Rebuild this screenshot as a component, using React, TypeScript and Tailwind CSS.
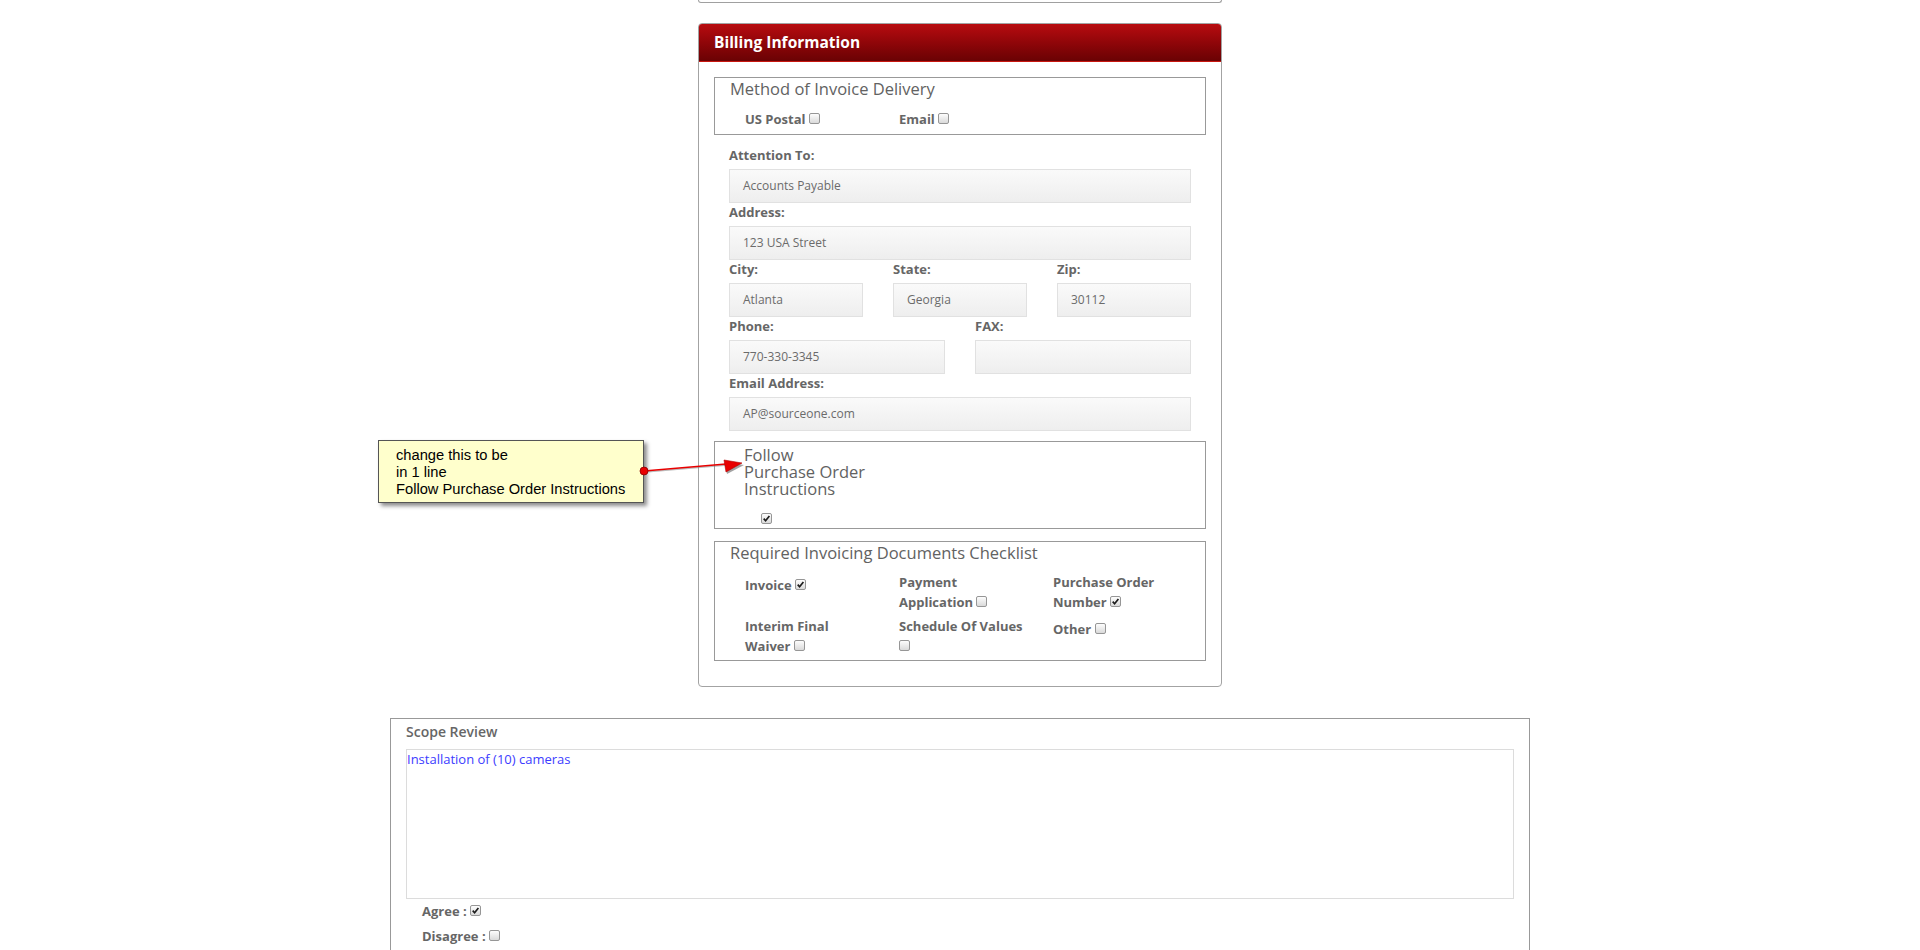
import React from "react";

const font = { fontFamily: '"Open Sans", "Liberation Sans", sans-serif' };

function Check({ checked = false, className = "" }: { checked?: boolean; className?: string }) {
  return (
    <span
      className={`inline-block w-[11px] h-[11px] rounded-[2px] border border-[#969696] bg-gradient-to-b from-[#fdfdfd] to-[#dadada] align-baseline ${className}`}
    >
      {checked && (
        <svg viewBox="0 0 9 9" className="block w-full h-full">
          <path d="M1.7 4.6 3.6 6.7 7.4 2" fill="none" stroke="#1c1c1c" strokeWidth="1.7" />
        </svg>
      )}
    </span>
  );
}

function Field({ label, value = "", className = "" }: { label: string; value?: string; className?: string }) {
  return (
    <div className={className}>
      <div className="mb-[5px] text-[13px] font-bold leading-[18px] text-[#666]">{label}</div>
      <div className="flex h-[34px] items-center border border-[#e1e1e1] bg-gradient-to-b from-[#fafafa] to-[#eeeeee] pl-[13px] text-[12px] text-[#6b6b6b]">
        {value}
      </div>
    </div>
  );
}

const item = "text-[13px] font-bold leading-[20px] text-[#666]";

export default function App() {
  return (
    <div className="relative h-[950px] w-[1920px] overflow-hidden bg-white" style={font}>
      {/* end of the panel above */}
      <div className="mx-auto h-[3px] w-[524px] rounded-b-[3px] border-x border-b border-[#a0a0a0]" />

      {/* Billing Information */}
      <div className="mx-auto mt-[20px] w-[524px] overflow-hidden rounded-[4px] border border-[#a3a3a3]">
        <div className="flex h-[38px] items-center border-b border-[#c8160f] bg-gradient-to-b from-[#b80c10] to-[#6a0204] pl-[15px] text-[15.5px] font-bold text-white">
          Billing Information
        </div>
        <div className="px-[15px] pb-[25px] pt-[15px]">
          <div className="border border-[#999] pb-[5px] pt-[2px]">
            <div className="pl-[15px] text-[16.5px] leading-[17px] text-[#626262]">Method of Invoice Delivery</div>
            <div className="mt-[12px] grid grid-cols-[154px_154px] pl-[30px]">
              <div className={item}>
                US Postal <Check />
              </div>
              <div className={item}>
                Email <Check />
              </div>
            </div>
          </div>

          <div className="mt-[11px] flex flex-col px-[15px]">
            <Field label="Attention To:" value="Accounts Payable" />
            <Field label="Address:" value="123 USA Street" />
            <div className="grid grid-cols-3 gap-x-[30px]">
              <Field label="City:" value="Atlanta" />
              <Field label="State:" value="Georgia" />
              <Field label="Zip:" value="30112" />
            </div>
            <div className="grid grid-cols-2 gap-x-[30px]">
              <Field label="Phone:" value="770-330-3345" />
              <Field label="FAX:" />
            </div>
            <Field label="Email Address:" value="AP@sourceone.com" />
          </div>

          <div className="mt-[10px] border border-[#999] pb-[4px] pl-[29px] pt-[4px]">
            <div className="text-[16.5px] leading-[17px] text-[#626262]">
              Follow
              <br />
              Purchase Order
              <br />
              Instructions
            </div>
            <Check checked className="!block ml-[17px] mt-[16px]" />
          </div>

          <div className="mt-[12px] border border-[#999] pb-[4px] pt-[2px]">
            <div className="pl-[15px] text-[16.5px] leading-[17px] text-[#626262]">
              Required Invoicing Documents Checklist
            </div>
            <div className="mt-[11px] grid grid-cols-[154px_154px_154px] gap-y-[4px] pl-[30px]">
              <div className={`${item} pt-[3px]`}>
                Invoice <Check checked />
              </div>
              <div className={item}>
                Payment
                <br />
                Application <Check />
              </div>
              <div className={item}>
                Purchase Order
                <br />
                Number <Check checked />
              </div>
              <div className={item}>
                Interim Final
                <br />
                Waiver <Check />
              </div>
              <div className={item}>
                Schedule Of Values
                <br />
                <Check />
              </div>
              <div className={`${item} pt-[3px]`}>
                Other <Check />
              </div>
            </div>
          </div>
        </div>
      </div>

      {/* Scope Review */}
      <div className="mx-auto mt-[31px] w-[1140px] border border-[#999] px-[15px] pb-[30px] pt-[3px]">
        <div className="text-[14px] font-semibold leading-[20px] text-[#666]">Scope Review</div>
        <div className="mt-[7px] h-[150px] border border-[#dcdcdc] text-[13px] leading-[18.5px] text-[#3c3cff]">
          Installation of (10) cameras
        </div>
        <div className="mt-[2px] pl-[16px]">
          <div className={item}>
            Agree : <Check checked />
          </div>
          <div className={`${item} mt-[5px]`}>
            Disagree : <Check />
          </div>
        </div>
      </div>

      {/* review note */}
      <div
        className="absolute left-[378px] top-[440px] h-[63px] w-[266px] border border-[#555] bg-[#ffffcc] pl-[17px] pt-[6px] text-[14.7px] leading-[17px] text-black shadow-[3px_3px_4px_rgba(0,0,0,0.45)]"
        style={{ fontFamily: '"Liberation Sans", Arial, sans-serif' }}
      >
        change this to be
        <br />
        in 1 line
        <br />
        Follow Purchase Order Instructions
      </div>
      <svg className="absolute left-[636px] top-[452px]" width="112" height="28" viewBox="0 0 112 28">
        <line x1="9" y1="20" x2="91" y2="13" stroke="#7a7a7a" strokeOpacity="0.5" strokeWidth="1.5" />
        <polygon points="89,10 108,13 91,22" fill="#555" fillOpacity="0.55" />
        <line x1="8" y1="19" x2="90" y2="12" stroke="#e80000" strokeWidth="1.4" />
        <polygon points="88,8 106,11 90,20" fill="#e80000" stroke="#b00000" strokeWidth="0.6" />
        <circle cx="8" cy="19" r="4" fill="#e80000" stroke="#8a0000" strokeWidth="0.8" />
      </svg>
    </div>
  );
}
